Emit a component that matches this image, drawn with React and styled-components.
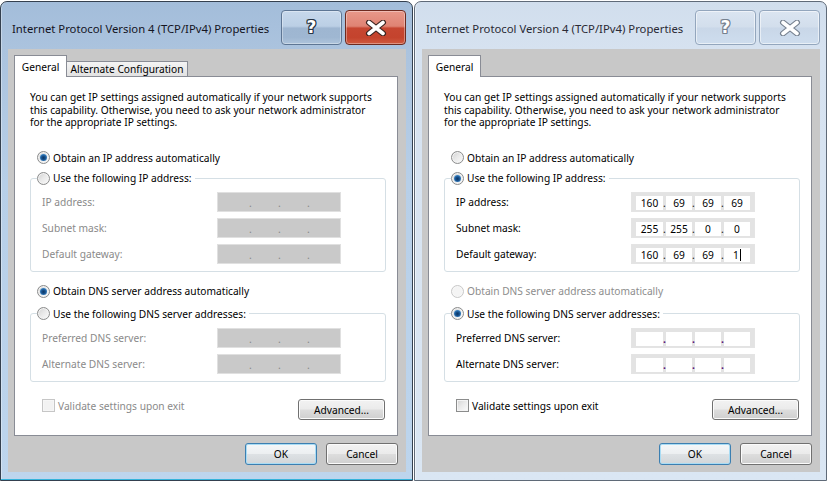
import React from 'react';
import styled, { createGlobalStyle } from 'styled-components';

const GlobalStyle = createGlobalStyle`
  html, body { margin: 0; padding: 0; background: #ffffff; }
  body {
    font-family: "Noto Sans", "Open Sans", sans-serif;
    font-size: 10.2px;
    color: #000;
  }
  * { box-sizing: border-box; }
`;

const Page = styled.div`
  width: 829px;
  height: 484px;
  overflow: hidden;
  display: flex;
  gap: 1px;
  padding-top: 1px;
  background: #ffffff;
`;

const Window = styled.div`
  width: 413px;
  height: 480px;
  flex: none;
  display: flex;
  flex-direction: column;
  padding: 0 6px 8px 7px;
  border: 1px solid ${p => (p.$active ? '#34404f' : '#5f6a78')};
  border-radius: 7px 7px 0 0;
  background: ${p =>
    p.$active
      ? 'linear-gradient(180deg, #a3bdda 0px, #abc3de 47px, #b7cfe8 180px, #bdd5ed 100%)'
      : 'linear-gradient(180deg, #d1deed 0px, #d6e2f0 47px, #dae6f3 100%)'};
  box-shadow: ${p => (p.$active ? 'inset 0 -1px 0 #35b3da, inset 1px 0 0 rgba(255,255,255,0.35)' : 'inset 1px 0 0 rgba(255,255,255,0.5)')};
`;

const TitleBar = styled.div`
  height: 47px;
  flex: none;
  display: flex;
  align-items: flex-start;
  padding-top: 8px;
`;

const Title = styled.div`
  flex: 1;
  padding: 11px 0 0 4px;
  font-size: 11.3px;
  line-height: 16px;
  color: ${p => (p.$active ? '#14141f' : '#2a2a35')};
  white-space: nowrap;
`;

const CaptionGroup = styled.div`
  display: flex;
  gap: 3px;
`;

const CaptionButton = styled.div`
  width: 61px;
  height: 35px;
  border-radius: 4px;
  display: flex;
  align-items: center;
  justify-content: center;
  border: 1px solid ${p => (p.$inactive ? '#93a6bd' : p.$close ? '#6e2a1f' : '#5e7694')};
  background: ${p =>
    p.$inactive
      ? 'linear-gradient(180deg, #dbe5f1 0%, #d2deec 48%, #c9d7e8 52%, #ceddee 100%)'
      : p.$close
      ? 'linear-gradient(180deg, #e8988a 0%, #df8373 46%, #c64631 52%, #c4432d 80%, #cf5a3f 100%)'
      : 'linear-gradient(180deg, #c7d8eb 0%, #bbcfe5 46%, #9eb6d1 52%, #9fb7d2 80%, #aec4dc 100%)'};
  box-shadow: inset 0 0 0 1px ${p => (p.$inactive ? 'rgba(255,255,255,0.55)' : 'rgba(255,255,255,0.35)')};
`;

const HelpGlyph = styled.span`
  font-family: "DejaVu Sans", sans-serif;
  font-weight: bold;
  font-size: 17px;
  line-height: 17px;
  color: #ffffff;
  text-shadow: ${p => {
    const c = p.$inactive ? '#76818f' : '#283444';
    return `1px 0 0 ${c}, -1px 0 0 ${c}, 0 1px 0 ${c}, 0 -1px 0 ${c}, 1px 1px 0 ${c}, -1px -1px 0 ${c}, 1px -1px 0 ${c}, -1px 1px 0 ${c}`;
  }};
`;

const CloseGlyph = ({ inactive }) => (
  <svg width="22" height="16" viewBox="0 0 22 16">
    <path d="M4 2.5 L18 13.5 M18 2.5 L4 13.5" stroke={inactive ? '#76818f' : '#3a2320'} strokeWidth="6" strokeLinecap="round" fill="none" />
    <path d="M4 2.5 L18 13.5 M18 2.5 L4 13.5" stroke="#ffffff" strokeWidth="3.6" strokeLinecap="round" fill="none" />
  </svg>
);

const Client = styled.div`
  height: 423px;
  flex: none;
  background: #c8c8c8;
  padding: 6px 8px 0 6px;
  display: flex;
  flex-direction: column;
`;

const TabStrip = styled.div`
  height: 21px;
  display: flex;
  align-items: flex-end;
  position: relative;
  z-index: 1;
`;

const Tab = styled.div`
  display: flex;
  align-items: center;
  justify-content: center;
  white-space: nowrap;
  border: 1px solid #898c95;
  border-bottom: none;
  ${p =>
    p.$selected
      ? `height: 22px; margin-bottom: -1px; background: #ffffff; width: ${p.$w}px;`
      : `height: 15px; border-left: none; padding-bottom: 1px; width: ${p.$w}px;
         background: linear-gradient(180deg, #f4f4f4 0%, #ebebeb 50%, #e2e2e2 100%);`}
`;

const Panel = styled.div`
  height: 360px;
  flex: none;
  background: #ffffff;
  border: 1px solid #898c95;
  padding: 14px 11px 0 15px;
  display: flex;
  flex-direction: column;
`;

const Description = styled.p`
  margin: 0;
  line-height: 12.5px;
  white-space: nowrap;
`;

const Option = styled.div`
  display: flex;
  align-items: center;
  gap: 3px;
  height: 14px;
  margin: ${p => p.$mt}px 0 0 7px;
  color: ${p => (p.$disabled ? '#8d8d8d' : '#000')};
  white-space: nowrap;
`;

const RadioCircle = styled.span`
  width: 13px;
  height: 13px;
  flex: none;
  border-radius: 50%;
  border: 1px solid ${p => (p.$disabled ? '#c8c8c8' : '#8b8c8c')};
  background: ${p =>
    p.$disabled
      ? '#f4f4f4'
      : 'linear-gradient(135deg, #d0d0d0 0%, #e8e8e8 45%, #fbfbfb 100%)'};
  box-shadow: inset 0 0 0 1px ${p => (p.$disabled ? '#f7f7f7' : '#f3f3f3')};
  display: flex;
  align-items: center;
  justify-content: center;
  &::after {
    content: '';
    display: ${p => (p.$checked ? 'block' : 'none')};
    width: 7px;
    height: 7px;
    border-radius: 50%;
    background: radial-gradient(circle at 50% 55%, #0a3563 0%, #174f8a 35%, #3a86c7 70%, #86c0ea 100%);
  }
`;

const Group = styled.fieldset`
  margin: ${p => p.$mt}px 0 0 0;
  padding: 0 0 7px 0;
  border: 1px solid #d5dfe5;
  border-radius: 3px;
  min-width: 0;
`;

const Legend = styled.legend`
  margin-left: 6px;
  padding: 0 3px 0 0;
  height: 14px;
  display: flex;
  align-items: center;
  gap: 3px;
  white-space: nowrap;
`;

const FieldRow = styled.div`
  display: flex;
  align-items: center;
  height: 20px;
  padding-left: 11px;
  margin-top: ${p => p.$mt}px;
`;

const FieldLabel = styled.span`
  width: 175px;
  flex: none;
  color: ${p => (p.$disabled ? '#8a8a8a' : '#000')};
  white-space: nowrap;
`;

const IpBox = styled.div`
  width: 124px;
  height: 20px;
  display: flex;
  padding: 3px 2px 1px 4px;
  border: 1px solid ${p => (p.$disabled ? '#e0e0e0' : '#e4e4e4')};
  background: ${p => (p.$disabled ? '#c9c9c9' : '#e3e3e3')};
`;

const Octet = styled.span`
  width: ${p => p.$w}px;
  height: 14px;
  flex: none;
  display: flex;
  align-items: center;
  justify-content: center;
  line-height: 14px;
  background: ${p => (p.$disabled ? 'transparent' : '#ffffff')};
`;

const Dot = styled.span`
  width: 3px;
  flex: none;
  text-align: center;
  line-height: 14px;
  font-size: 10.5px;
  font-weight: ${p => (p.$tint ? 'bold' : 'normal')};
  color: ${p => (p.$disabled ? '#8a8a8a' : p.$tint ? '#5a0f78' : '#222')};
`;

const Caret = styled.span`
  width: 1px;
  height: 12px;
  background: #000;
  margin-left: 1px;
`;

const BottomRow = styled.div`
  display: flex;
  align-items: flex-start;
  justify-content: space-between;
  margin: 17.5px 1px 0 12px;
`;

const CheckOption = styled.div`
  display: flex;
  align-items: center;
  gap: 3px;
  height: 13px;
  color: ${p => (p.$disabled ? '#8a8a8a' : '#000')};
  white-space: nowrap;
`;

const CheckBox = styled.span`
  width: 13px;
  height: 13px;
  flex: none;
  border: 1px solid ${p => (p.$disabled ? '#c6c6c6' : '#8b8c8c')};
  background: ${p =>
    p.$disabled ? '#f2f2f2' : 'linear-gradient(135deg, #d3d3d3 0%, #e9e9e9 45%, #fbfbfb 100%)'};
  box-shadow: inset 0 0 0 1px ${p => (p.$disabled ? '#f6f6f6' : '#f4f4f4')};
`;

const Button = styled.div`
  width: ${p => p.$w}px;
  height: ${p => p.$h}px;
  flex: none;
  display: flex;
  align-items: center;
  justify-content: center;
  border-radius: 3px;
  border: 1px solid ${p => (p.$default ? '#3c7fb1' : '#707070')};
  background: ${p =>
    p.$default
      ? 'linear-gradient(180deg, #f4f7f9 0%, #eceff1 48%, #dde1e4 52%, #d2d6d9 100%)'
      : 'linear-gradient(180deg, #f2f2f2 0%, #ebebeb 48%, #dddddd 52%, #cfcfcf 100%)'};
  box-shadow: inset 0 0 0 1px ${p => (p.$default ? '#a9dcf4' : '#fbfbfb')};
  white-space: nowrap;
`;

const Footer = styled.div`
  display: flex;
  justify-content: flex-end;
  gap: 9px;
  margin-top: 7px;
`;

const IpField = ({ disabled, values, caret, tint }) => {
  const v = values || ['', '', '', ''];
  const widths = [27, 26, 26, 26];
  const parts = [];
  v.forEach((val, i) => {
    parts.push(
      <Octet key={'o' + i} $w={widths[i]} $disabled={disabled}>
        {val}
        {caret && i === 3 ? <Caret /> : null}
      </Octet>
    );
    if (i < 3) parts.push(<Dot key={'d' + i} $disabled={disabled} $tint={tint && !disabled}>.</Dot>);
  });
  return <IpBox $disabled={disabled}>{parts}</IpBox>;
};

const Dialog = ({ active, tabs, manualIp, dnsAutoDisabled, ipValues }) => {
  const ipDisabled = !manualIp;
  const dnsDisabled = !manualIp;
  return (
    <Window $active={active}>
      <TitleBar>
        <Title $active={active}>Internet Protocol Version 4 (TCP/IPv4) Properties</Title>
        <CaptionGroup>
          <CaptionButton $inactive={!active}>
            <HelpGlyph $inactive={!active}>?</HelpGlyph>
          </CaptionButton>
          <CaptionButton $inactive={!active} $close>
            <CloseGlyph inactive={!active} />
          </CaptionButton>
        </CaptionGroup>
      </TitleBar>
      <Client>
        <TabStrip>
          {tabs.map((t, i) => (
            <Tab key={t} $selected={i === 0} $w={i === 0 ? 53 : 121}>
              {t}
            </Tab>
          ))}
        </TabStrip>
        <Panel>
          <Description>
            You can get IP settings assigned automatically if your network supports
            <br />
            this capability. Otherwise, you need to ask your network administrator
            <br />
            for the appropriate IP settings.
          </Description>

          <Option $mt={22}>
            <RadioCircle $checked={!manualIp} />
            Obtain an IP address automatically
          </Option>

          <Group $mt={6.5}>
            <Legend>
              <RadioCircle $checked={manualIp} />
              Use the following IP address:
            </Legend>
            <FieldRow $mt={7}>
              <FieldLabel $disabled={ipDisabled}>IP address:</FieldLabel>
              <IpField disabled={ipDisabled} values={ipValues && ipValues[0]} />
            </FieldRow>
            <FieldRow $mt={6}>
              <FieldLabel $disabled={ipDisabled}>Subnet mask:</FieldLabel>
              <IpField disabled={ipDisabled} values={ipValues && ipValues[1]} />
            </FieldRow>
            <FieldRow $mt={6}>
              <FieldLabel $disabled={ipDisabled}>Default gateway:</FieldLabel>
              <IpField disabled={ipDisabled} values={ipValues && ipValues[2]} caret={!!ipValues} />
            </FieldRow>
          </Group>

          <Option $mt={12} $disabled={dnsAutoDisabled}>
            <RadioCircle $checked={!manualIp} $disabled={dnsAutoDisabled} />
            Obtain DNS server address automatically
          </Option>

          <Group $mt={8.5}>
            <Legend>
              <RadioCircle $checked={manualIp} />
              Use the following DNS server addresses:
            </Legend>
            <FieldRow $mt={7}>
              <FieldLabel $disabled={dnsDisabled}>Preferred DNS server:</FieldLabel>
              <IpField disabled={dnsDisabled} tint />
            </FieldRow>
            <FieldRow $mt={6}>
              <FieldLabel $disabled={dnsDisabled}>Alternate DNS server:</FieldLabel>
              <IpField disabled={dnsDisabled} tint />
            </FieldRow>
          </Group>

          <BottomRow>
            <CheckOption $disabled={!manualIp}>
              <CheckBox $disabled={!manualIp} />
              Validate settings upon exit
            </CheckOption>
            <Button $w={87} $h={21}>Advanced...</Button>
          </BottomRow>
        </Panel>
        <Footer>
          <Button $w={72} $h={22} $default>OK</Button>
          <Button $w={72} $h={22}>Cancel</Button>
        </Footer>
      </Client>
    </Window>
  );
};

export default function App() {
  return (
    <>
      <GlobalStyle />
      <Page>
        <Dialog active tabs={['General', 'Alternate Configuration']} manualIp={false} />
        <Dialog
          active={false}
          tabs={['General']}
          manualIp
          dnsAutoDisabled
          ipValues={[
            ['160', '69', '69', '69'],
            ['255', '255', '0', '0'],
            ['160', '69', '69', '1'],
          ]}
        />
      </Page>
    </>
  );
}
